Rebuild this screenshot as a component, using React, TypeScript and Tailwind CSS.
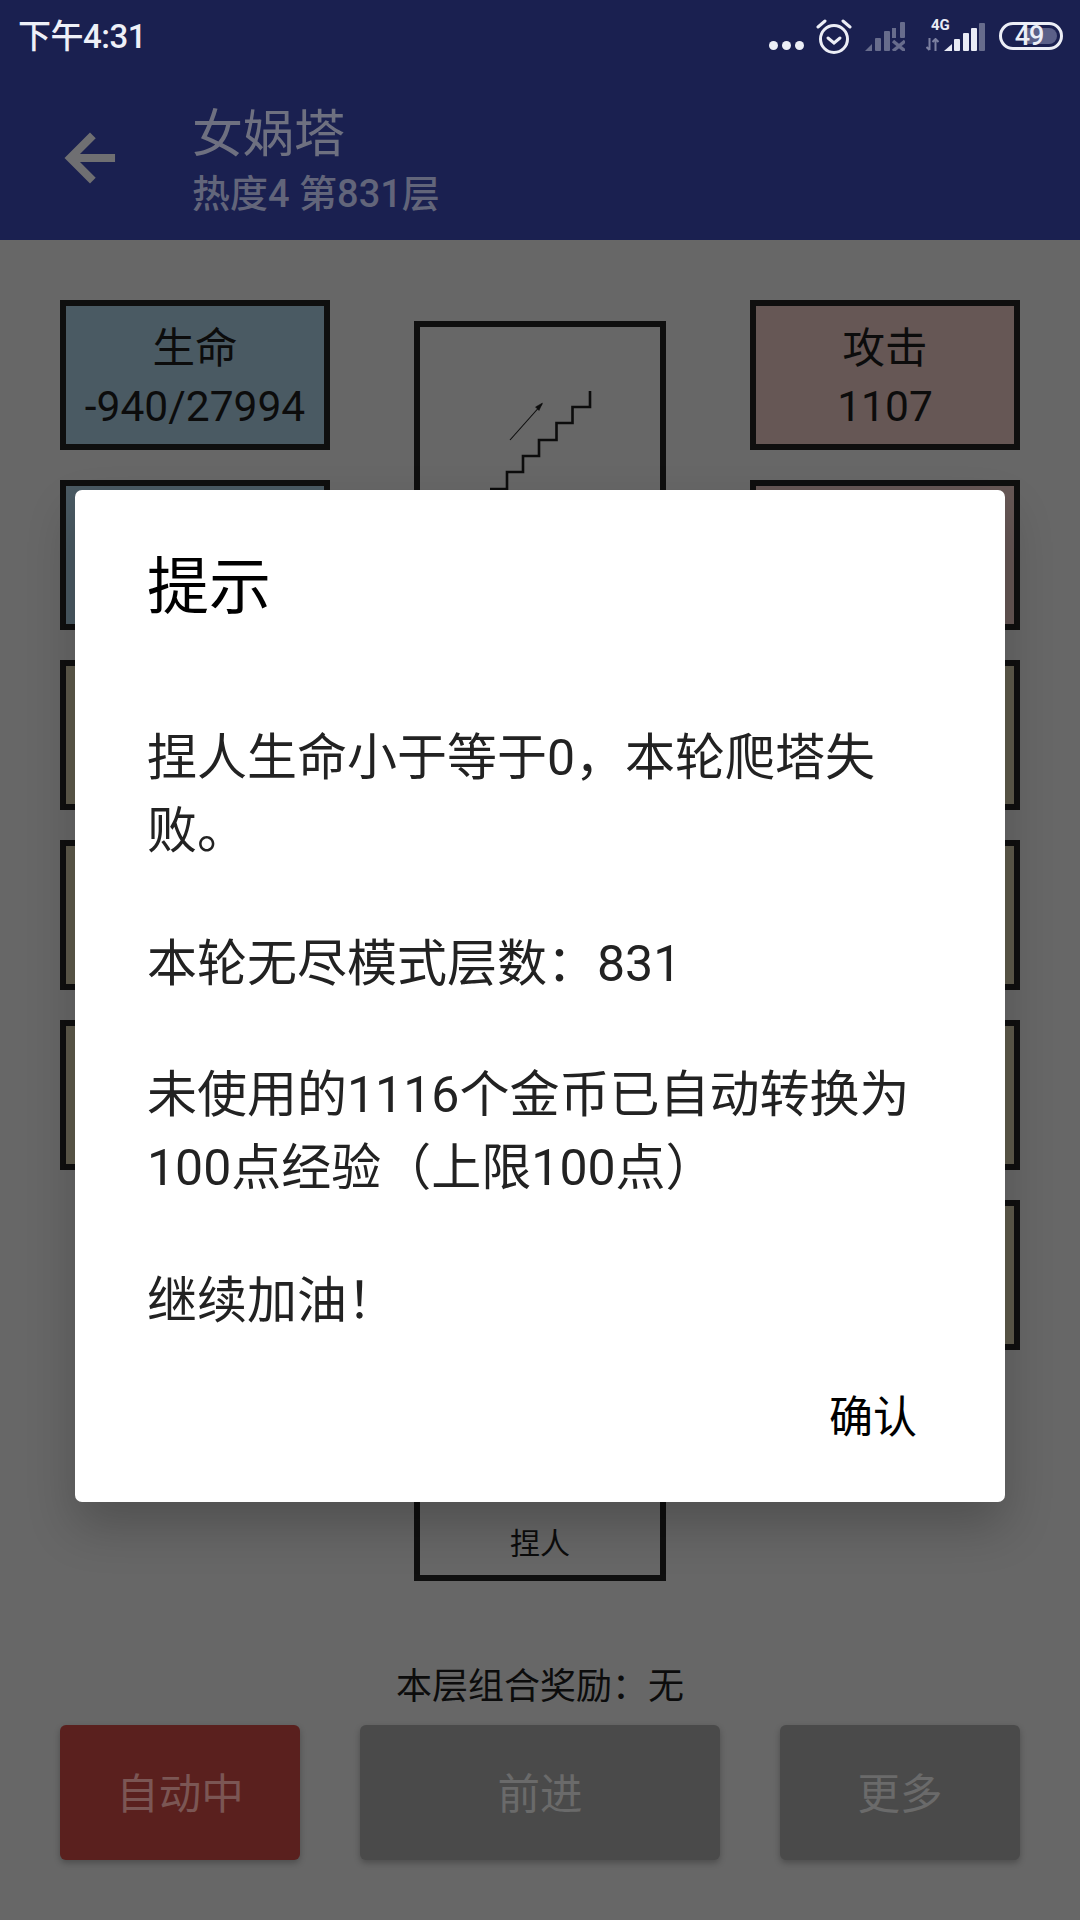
const FONT = "[font-family:Roboto,'Noto_Sans_CJK_SC',sans-serif]";

const LEFT_CARDS = [
  { id: 0, color: "bg-[#4a5a63]", label: "生命", value: "-940/27994" },
  { id: 1, color: "bg-[#4a5a63]" },
  { id: 2, color: "bg-[#5f5b4c]" },
  { id: 3, color: "bg-[#5f5b4c]" },
  { id: 4, color: "bg-[#5f5b4c]" },
];

const RIGHT_CARDS = [
  { id: 0, color: "bg-[#665755]", label: "攻击", value: "1107" },
  { id: 1, color: "bg-[#665755]" },
  { id: 2, color: "bg-[#5f5b4c]" },
  { id: 3, color: "bg-[#5f5b4c]" },
  { id: 4, color: "bg-[#5f5b4c]" },
  { id: 5, color: "bg-[#5f5b4c]" },
];

interface CardProps {
  color: string;
  label?: string;
  value?: string;
}

const StatCard: React.FC<CardProps> = ({ color, label, value }) => {
  return (
    <div
      className={`h-[150px] w-[270px] border-[6px] border-[#0f0f0f] ${color} flex flex-col items-center justify-center pt-[5px] text-[42.500px] leading-[58px] text-[#0c0c0c]`}
    >
      <div>{label}</div>
      <div>{value}</div>
    </div>
  );
};

const DimSignal = () => {
  const dim = "#676c8c";
  return (
    <svg width="40" height="30" viewBox="0 0 40 30" fill={dim}>
      <path d="M0 30 L7 23 V30 Z" />
      <rect x="10" y="17" width="6" height="13" rx="1" />
      <rect x="19" y="10" width="6" height="20" rx="1" />
      <rect x="27" y="7" width="4" height="10" />
      <rect x="35" y="1" width="5" height="16" rx="1" />
      <path d="M28 20 L40 30 M40 20 L28 30" stroke={dim} strokeWidth="3.500" />
    </svg>
  );
};

const ActiveSignal = () => {
  const on = "#e9ebf5";
  return (
    <svg width="41" height="28" viewBox="0 0 41 28">
      <path d="M0 28 L8 21 V28 Z" fill={on} />
      <rect x="10" y="16" width="6" height="12" rx="1" fill={on} />
      <rect x="19" y="10" width="6" height="18" rx="1" fill={on} />
      <rect x="27" y="5" width="6" height="23" rx="1" fill={on} />
      <rect x="35" y="0" width="6" height="28" rx="1" fill="#676c8c" />
    </svg>
  );
};

const StatusBar = () => {
  return (
    <div className="flex h-[72px] items-center justify-between pl-[18px] pr-[17px]">
      <span className="mt-[2px] text-[33px] font-medium tracking-[-0.5px] text-[#eef0f8]">
        下午4:31
      </span>
      <div className="flex items-center">
        <div className="mt-[18px] flex gap-1">
          <span className="h-[9px] w-[9px] rounded-full bg-[#eceef6]" />
          <span className="h-[9px] w-[9px] rounded-full bg-[#eceef6]" />
          <span className="h-[9px] w-[9px] rounded-full bg-[#eceef6]" />
        </div>
        <svg
          className="ml-3"
          width="36"
          height="36"
          viewBox="0 0 36 36"
          fill="none"
          stroke="#eceef6"
          strokeWidth="3"
        >
          <circle cx="18" cy="21" r="13.500" />
          <path d="M12 20 L18 25 L24 20" strokeLinecap="round" />
          <path d="M2 9 L9 3 M34 9 L27 3" strokeLinecap="round" />
        </svg>
        <div className="ml-[13px] mt-[-1px]">
          <DimSignal />
        </div>
        <div className="relative ml-[21px] mt-[-1px] h-[30px] w-[58px]">
          <span className="absolute left-[5px] top-[-4px] text-[15px] font-bold leading-[16px] text-[#e9ebf5]">
            4G
          </span>
          <svg
            className="absolute bottom-0 left-0"
            width="13"
            height="13"
            viewBox="0 0 13 13"
            fill="none"
            stroke="#7c80a0"
            strokeWidth="2"
          >
            <path d="M3.500 0 V12 M0.500 9 L3.500 12 M9.500 13 V1 M6.500 4 L9.500 1 L12.500 4" />
          </svg>
          <div className="absolute bottom-0 right-[-1px]">
            <ActiveSignal />
          </div>
        </div>
        <div className="relative ml-[15px] flex h-[28px] w-[64px] items-center justify-center rounded-full border-[3.500px] border-[#eceef6]">
          <span className="absolute bottom-[3px] right-[3px] top-[3px] w-[30px] rounded-r-full bg-[#5b6088]" />
          <span className="relative mr-[4px] text-[27px] font-medium leading-none tracking-[-1px] text-[#eceef6]">
            49
          </span>
        </div>
      </div>
    </div>
  );
};

const AppBar = () => {
  return (
    <div className="flex h-[168px] items-center pl-[54px]">
      <svg
        className="mt-[4px]"
        width="72"
        height="72"
        viewBox="0 0 24 24"
        fill="#6f6f72"
        stroke="#6f6f72"
        strokeWidth="0.700"
      >
        <path d="M20 11H7.830l5.590-5.590L12 4l-8 8 8 8 1.410-1.410L7.830 13H20v-2z" />
      </svg>
      <div className="ml-[66px] mt-[12px] flex flex-col">
        <span className="text-[51px] leading-[64px] text-[#6e7080]">女娲塔</span>
        <span className="text-[38px] font-medium leading-[54px] text-[#62657a]">热度4 第831层</span>
      </div>
    </div>
  );
};

const Stairs = () => {
  return (
    <svg width="240" height="180" viewBox="0 0 240 180" fill="none" stroke="#0c0c0c">
      {/* box inner origin is x=420, y=327 */}
      <path
        d="M170 64 V80 H152.500 V96 H136.500 V113 H119 V129 H103 V145 H87 V162 H70"
        strokeWidth="2.600"
      />
      <path d="M90 113 L122 77" strokeWidth="1.100" />
      <path d="M122.500 76 L115.500 80 L119 83.500 Z" fill="#0c0c0c" strokeWidth="0.500" />
    </svg>
  );
};

const Dialog = () => {
  return (
    <div className="absolute left-[75px] top-[490px] flex h-[1012px] w-[930px] flex-col rounded-[7px] bg-white pl-[72px] pr-[60px] shadow-[0_24px_48px_rgba(0,0,0,0.22)]">
      <h2 className="mt-[62px] text-[62px] leading-[72px] text-black">提示</h2>
      <div className="mt-[98px] text-[50px] leading-[73px] text-[#222222]">
        <p>捏人生命小于等于0，本轮爬塔失败。</p>
        <p className="mt-[60px]">本轮无尽模式层数：831</p>
        <p className="mt-[58px]">未使用的1116个金币已自动转换为100点经验（上限100点）</p>
        <p className="mt-[60px]">继续加油！</p>
      </div>
      <div className="mt-[52px] flex justify-end pr-[28px]">
        <button className="text-[44px] leading-[56px] text-black">确认</button>
      </div>
    </div>
  );
};

export default function App() {
  return (
    <div className={`relative flex h-[1920px] w-[1080px] flex-col overflow-hidden bg-[#676767] ${FONT}`}>
      <div className="bg-[#1a2050]">
        <StatusBar />
        <AppBar />
      </div>

      <div className="flex items-start justify-between px-[60px] pt-[60px]">
        <div className="flex flex-col gap-[30px]">
          {LEFT_CARDS.map((item) => (
            <StatCard key={item.id} color={item.color} label={item.label} value={item.value} />
          ))}
        </div>
        <div className="mt-[21px] flex h-[1260px] w-[252px] flex-col items-center justify-between border-[6px] border-[#0f0f0f] pb-[11px]">
          <Stairs />
          <span className="text-[30px] leading-[40px] text-[#0c0c0c]">捏人</span>
        </div>
        <div className="flex flex-col gap-[30px]">
          {RIGHT_CARDS.map((item) => (
            <StatCard key={item.id} color={item.color} label={item.label} value={item.value} />
          ))}
        </div>
      </div>

      <div className="mt-[84px] text-center text-[36px] leading-[44px] text-[#0c0c0c]">
        本层组合奖励：无
      </div>
      <div className="mt-[16px] flex justify-between px-[60px] text-[42.500px] text-[#6a6a6a]">
        <button className="h-[135px] w-[240px] rounded-[6px] bg-[#5a201e] pt-[4px] text-[#7b5654] shadow-[0_3px_6px_rgba(0,0,0,0.25)]">
          自动中
        </button>
        <button className="h-[135px] w-[360px] rounded-[6px] bg-[#4a4a4a] pt-[4px] shadow-[0_3px_6px_rgba(0,0,0,0.25)]">
          前进
        </button>
        <button className="h-[135px] w-[240px] rounded-[6px] bg-[#4a4a4a] pt-[4px] shadow-[0_3px_6px_rgba(0,0,0,0.25)]">
          更多
        </button>
      </div>

      <Dialog />
    </div>
  );
}
